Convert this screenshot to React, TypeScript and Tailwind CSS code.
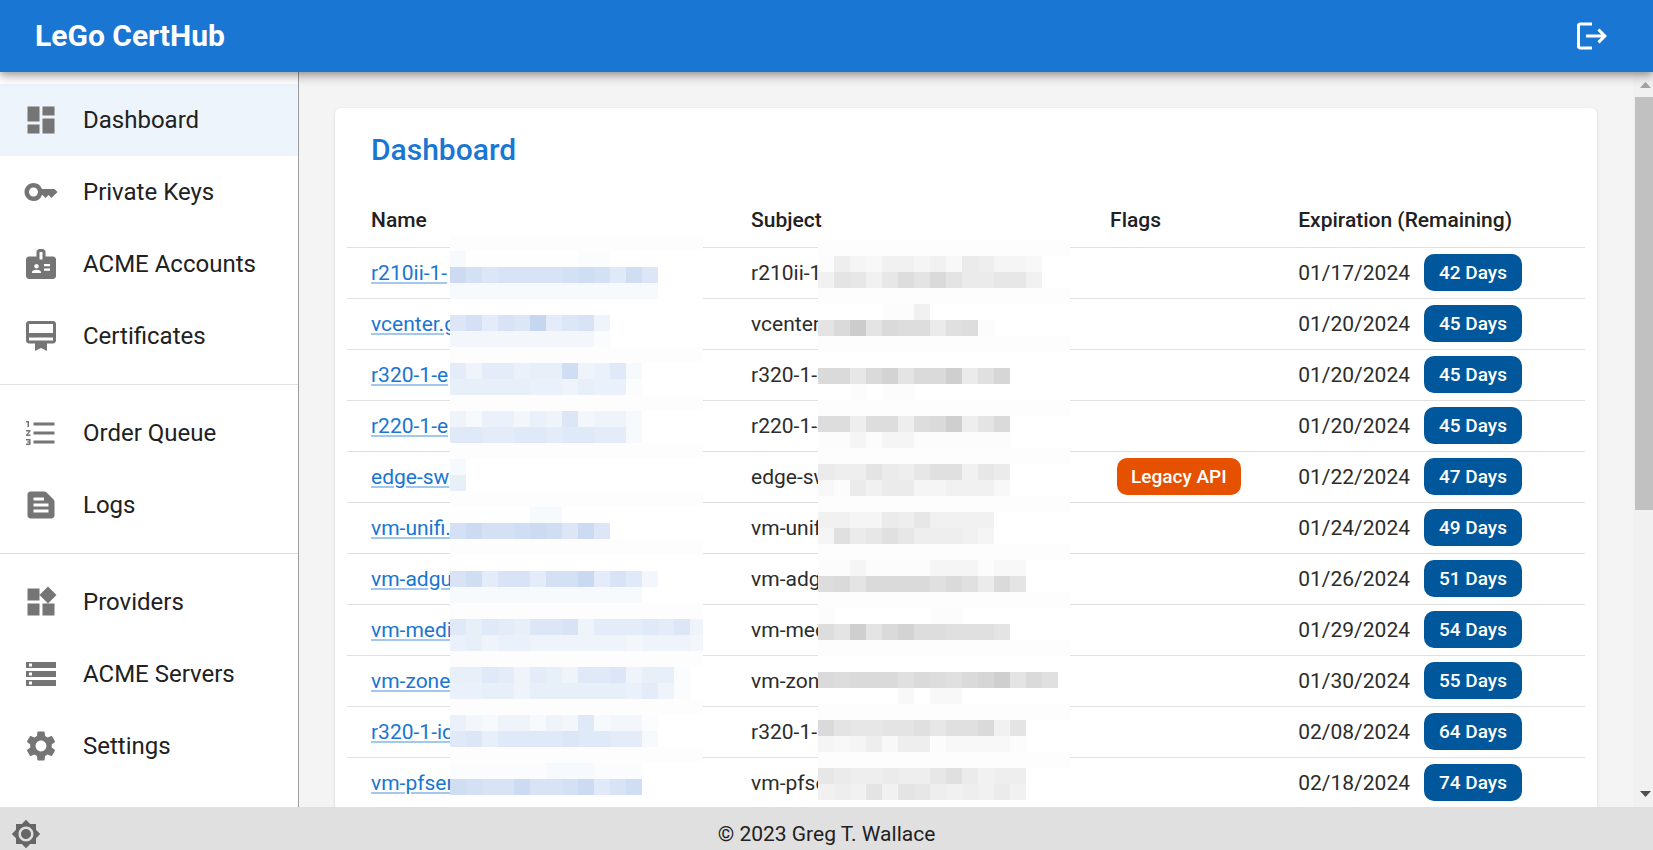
import type { IconType } from 'react-icons';
import {
  MdBadge,
  MdBrightness7,
  MdCardMembership,
  MdDashboard,
  MdFormatListNumbered,
  MdKey,
  MdLogout,
  MdSettings,
  MdStorage,
  MdTextSnippet,
  MdWidgets,
} from 'react-icons/md';

type NavItem = { label: string; icon: IconType; active?: boolean };

const navGroups: NavItem[][] = [
  [
    { label: 'Dashboard', icon: MdDashboard, active: true },
    { label: 'Private Keys', icon: MdKey },
    { label: 'ACME Accounts', icon: MdBadge },
    { label: 'Certificates', icon: MdCardMembership },
  ],
  [
    { label: 'Order Queue', icon: MdFormatListNumbered },
    { label: 'Logs', icon: MdTextSnippet },
  ],
  [
    { label: 'Providers', icon: MdWidgets },
    { label: 'ACME Servers', icon: MdStorage },
    { label: 'Settings', icon: MdSettings },
  ],
];

type Cert = { name: string; subject: string; legacy?: boolean; date: string; days: number };

const certs: Cert[] = [
  { name: 'r210ii-1-', subject: 'r210ii-1', date: '01/17/2024', days: 42 },
  { name: 'vcenter.g', subject: 'vcenter', date: '01/20/2024', days: 45 },
  { name: 'r320-1-e', subject: 'r320-1-', date: '01/20/2024', days: 45 },
  { name: 'r220-1-e', subject: 'r220-1-', date: '01/20/2024', days: 45 },
  { name: 'edge-sw', subject: 'edge-sw', legacy: true, date: '01/22/2024', days: 47 },
  { name: 'vm-unifi.', subject: 'vm-unif', date: '01/24/2024', days: 49 },
  { name: 'vm-adgu', subject: 'vm-adg', date: '01/26/2024', days: 51 },
  { name: 'vm-medi', subject: 'vm-med', date: '01/29/2024', days: 54 },
  { name: 'vm-zone', subject: 'vm-zon', date: '01/30/2024', days: 55 },
  { name: 'r320-1-id', subject: 'r320-1-', date: '02/08/2024', days: 64 },
  { name: 'vm-pfser', subject: 'vm-pfse', date: '02/18/2024', days: 74 },
];

// One hex digit per 16px cell: 0 is clear, f is the full tint. "-" is a faint full-width band.
const nameMosaic = [
  '-',
  '2000000011',
  'db9aaaabcb8c9',
  '2222222222222',
  '',
  '9b7a9f79a4',
  '3333333331',
  '-',
  '7477566c4582',
  '666665546551',
  '-',
  '425535493442',
  '887788788772',
  '-',
  '2',
  '6',
  '-',
  '0000022',
  'bdbbcdc9d9',
  '-',
  '',
  'ac7aa7bbe7a83',
  '222222222222',
  '-',
  '8687699a47778794',
  '5645544444434443',
  '-',
  '668747648894661',
  '556646666665741',
  '-',
  '5324424382331',
  '8968888988772',
  '-',
  '111111222111',
  'cbaadaabd8ac',
];

const subjectMosaic = [
  '-',
  '15324434265332',
  '48747a8b866774',
  '-',
  '0000114',
  '8bf8baa69a1',
  '-',
  '',
  'bb7bd8bbe69c',
  '001011',
  '-',
  'aa5aa5abe58b',
  '113133111111',
  '-',
  '655865799476',
  '216466334442',
  '-',
  '44336574444',
  '39679755543',
  '-',
  '1131111333122',
  'ab8bbbb9b96b8',
  '-',
  '100000011',
  'a8e8bdaa9998',
  '-',
  '',
  'babbb9ba9bce8b9',
  '000002022',
  '-',
  'b877889799b48',
  '3235255122221',
  '-',
  '7655655796455',
  '4548487545464',
];

type MosaicProps = { rows: string[]; tint: string; width: number; className: string };

function Mosaic({ rows, tint, width, className }: MosaicProps) {
  const height = rows.length * 16;
  return (
    <svg
      aria-hidden="true"
      width={width}
      height={height}
      viewBox={`0 0 ${width} ${height}`}
      shapeRendering="crispEdges"
      className={className}
    >
      <rect width={width} height={height} fill="#fff" />
      {rows.map((row, y) =>
        row === '-' ? (
          <rect key={y} y={y * 16} width={width} height={16} fill="#fdfdfd" />
        ) : (
          [...row].map((cell, x) => {
            const level = parseInt(cell, 16);
            return level > 0 ? (
              <rect key={`${y}-${x}`} x={x * 16} y={y * 16} width={16} height={16} fill={tint} fillOpacity={level / 15} />
            ) : null;
          })
        ),
      )}
    </svg>
  );
}

function Header() {
  return (
    <header className="relative z-10 flex h-[72px] shrink-0 items-center justify-between bg-[#1976d2] pr-[43px] pl-[35px] text-white shadow-[0_3px_6px_-1px_rgba(0,0,0,0.2),0_6px_8px_rgba(0,0,0,0.14),0_2px_15px_rgba(0,0,0,0.12)]">
      <div className="text-[30px] leading-[48px] font-bold">LeGo CertHub</div>
      <button type="button" aria-label="Log out">
        <MdLogout className="size-9" />
      </button>
    </header>
  );
}

function Sidebar() {
  return (
    <nav className="w-[299px] shrink-0 overflow-hidden border-r border-[#9b9b9b] bg-white">
      {navGroups.map((group, i) => (
        <ul key={i} className={i > 0 ? 'border-t border-[#e0e0e0] py-3' : 'py-3'}>
          {group.map(({ label, icon: Icon, active }) => (
            <li key={label}>
              <a
                href="#"
                className={
                  active
                    ? 'flex h-[72px] items-center gap-6 bg-[#edf4fc] pl-[23px] text-2xl'
                    : 'flex h-[72px] items-center gap-6 pl-[23px] text-2xl'
                }
              >
                <Icon className="size-9 text-[#757575]" />
                {label}
              </a>
            </li>
          ))}
        </ul>
      ))}
    </nav>
  );
}

function CertTable() {
  return (
    <table className="w-full table-fixed text-left text-[21px] leading-[36px]">
      <thead>
        <tr className="h-[54px] border-b border-[#e0e0e0]">
          <th className="relative w-[30.7%] px-6 font-medium">
            Name
            <Mosaic rows={nameMosaic} tint="#c4d6f0" width={253} className="absolute top-[42px] left-[103px]" />
          </th>
          <th className="relative w-[29%] px-6 font-medium">
            Subject
            <Mosaic rows={subjectMosaic} tint="#cccccc" width={252} className="absolute top-[47px] left-[91px]" />
          </th>
          <th className="w-[15.2%] px-6 font-medium">Flags</th>
          <th className="px-6 font-medium">Expiration (Remaining)</th>
        </tr>
      </thead>
      <tbody className="text-[#2c2c2c]">
        {certs.map((cert) => (
          <tr key={cert.name} className="h-[51px] border-b border-[#e0e0e0]">
            <td className="px-6">
              <a
                href="#"
                className="text-[#1976d2] underline decoration-[#a3c8ed] decoration-2 underline-offset-2"
              >
                {cert.name}
              </a>
            </td>
            <td className="px-6">{cert.subject}</td>
            <td className="px-6">
              {cert.legacy && (
                <span className="ml-[7px] flex h-[37px] w-fit items-center rounded-[10px] bg-[#e65100] px-[14px] text-[19px] font-medium text-white">
                  Legacy API
                </span>
              )}
            </td>
            <td className="px-6">
              <div className="flex items-center gap-[14px] whitespace-nowrap">
                {cert.date}
                <span className="flex h-[37px] items-center rounded-[10px] bg-[#01579b] px-[15px] text-[19px] font-medium text-white">
                  {cert.days} Days
                </span>
              </div>
            </td>
          </tr>
        ))}
      </tbody>
    </table>
  );
}

function ScrollRail() {
  return (
    <div aria-hidden="true" className="flex w-5 shrink-0 flex-col items-end bg-[#f1f1f1] pl-[2px]">
      <svg viewBox="0 0 18 25" className="h-[25px] w-[18px]">
        <path d="M5 16l5.5-6 5.5 6z" fill="#a3a3a3" />
      </svg>
      <div className="h-[413px] w-full bg-[#c1c1c1]" />
      <div className="grow" />
      <svg viewBox="0 0 18 24" className="h-6 w-[18px]">
        <path d="M5 8l5.5 6 5.5-6z" fill="#505050" />
      </svg>
    </div>
  );
}

export default function App() {
  return (
    <div className="flex h-screen flex-col overflow-hidden bg-[#f4f4f4] font-[Roboto,sans-serif] text-[#212121]">
      <Header />
      <div className="flex min-h-0 grow">
        <Sidebar />
        <main className="min-w-0 grow overflow-hidden p-9">
          <section className="rounded-md bg-white px-3 pt-[18px] pb-6 shadow-[0_3px_2px_-1px_rgba(0,0,0,0.12),0_1px_3px_rgba(0,0,0,0.14)]">
            <h1 className="mb-[19px] px-6 text-[30px] leading-[48px] font-medium text-[#1976d2]">Dashboard</h1>
            <CertTable />
          </section>
        </main>
        <ScrollRail />
      </div>
      <footer className="grid h-[43px] shrink-0 grid-cols-3 items-start overflow-hidden bg-[#e0e0e0] pt-[9px]">
        <button type="button" aria-label="Toggle color theme" className="ml-[11px] flex h-9 w-fit items-center text-[#666666]">
          <MdBrightness7 className="size-[30px]" />
        </button>
        <p className="text-center text-[21px] leading-[36px]">© 2023 Greg T. Wallace</p>
      </footer>
    </div>
  );
}
